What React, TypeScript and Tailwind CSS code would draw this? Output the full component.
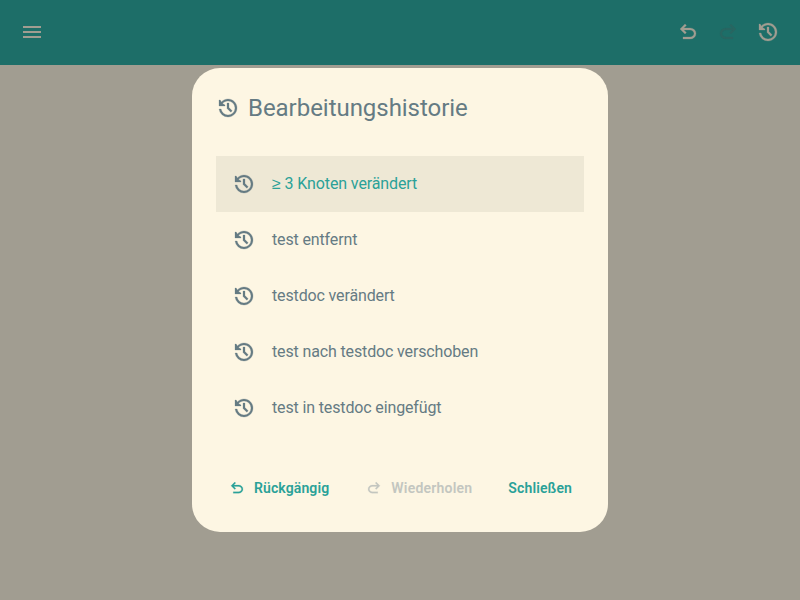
import React from "react";

const HISTORY =
  "M12 21q-3.45 0-6.012-2.287T3.05 13H5.1q.35 2.6 2.313 4.3T12 19q2.925 0 4.963-2.037T19 12t-2.037-4.962T12 5q-1.725 0-3.225.8T6.6 7.6L9 9V10H3V4h1.2L5.4 5.9q1.275-1.4 3.113-2.15T12 3q1.875 0 3.513.713t2.85 1.924 1.925 2.85T21 12t-.712 3.513-1.925 2.85-2.85 1.925T12 21m2.8-4.8L11 12.4V7h2v4.6l3.2 3.2z";
const UNDO =
  "M7 19v-2h7.1q1.575 0 2.738-1T18 13.5 16.838 11 14.1 10H7.8l2.6 2.6L9 14 4 9l5-5 1.4 1.4L7.8 8h6.3q2.425 0 4.163 1.575T20 13.5t-1.737 3.925T14.1 19z";
const REDO =
  "M9.9 19q-2.425 0-4.163-1.575T4 13.5t1.737-3.925T9.9 8h6.3l-2.6-2.6L15 4l5 5-5 5-1.4-1.4 2.6-2.6H9.9q-1.575 0-2.738 1T6 13.5 7.163 16 9.9 17H17v2z";
const MENU = "M3 6h18v2H3V6m0 5h18v2H3v-2m0 5h18v2H3v-2Z";

function Icon({ d, className, stroke = 0.25 }: { d: string; className: string; stroke?: number }) {
  return (
    <svg viewBox="0 0 24 24" fill="currentColor" stroke="currentColor" strokeWidth={stroke} className={`shrink-0 ${className}`}>
      <path d={d} />
    </svg>
  );
}

const entries = [
  { sign: "≥", text: " 3 Knoten verändert" },
  { text: "test entfernt" },
  { text: "testdoc verändert" },
  { text: "test nach testdoc verschoben" },
  { text: "test in testdoc eingefügt" },
];

export default function App() {
  return (
    <div className="relative h-[600px] w-[800px] overflow-hidden bg-[#a19d91] font-['Roboto',sans-serif] text-[#657b83]">
      <header className="flex h-[65px] items-center justify-between bg-[#1d6e68] px-5 pb-px text-[#a19d91]">
        <Icon d={MENU} stroke={0} className="size-6" />
        <div className="flex gap-4">
          <Icon d={UNDO} className="size-6" />
          <Icon d={REDO} className="size-6 text-[#286661]" />
          <Icon d={HISTORY} className="size-6" />
        </div>
      </header>
      <div role="dialog" className="absolute left-[192px] top-[68px] h-[464px] w-[416px] rounded-[28px] bg-[#fdf6e3] px-6">
        <h2 className="flex h-20 items-center gap-2 text-2xl leading-8 tracking-[-0.04px]">
          <Icon d={HISTORY} className="size-6" />
          Bearbeitungshistorie
        </h2>
        <ul className="mt-2">
          {entries.map((entry, i) => (
            <li key={entry.text} className={`flex h-14 items-center gap-4 px-4 text-base ${i === 0 ? "bg-[#eee8d5] tracking-[-0.11px]" : "tracking-[-0.14px]"}`}>
              <Icon d={HISTORY} className="size-6" />
              <span className={i === 0 ? "whitespace-pre text-[#2aa198]" : ""}>
                {entry.sign && <span className="font-['Liberation_Sans',sans-serif] leading-none">{entry.sign}</span>}
                {entry.text}
              </span>
            </li>
          ))}
        </ul>
        <div className="mt-8 flex h-10 items-center justify-end gap-2 text-sm font-semibold tracking-[0.12px] text-[#2aa198]">
          <button className="flex items-center gap-2 pl-3 pr-4"><Icon d={UNDO} className="size-[18px]" />Rückgängig</button>
          <button className="flex items-center gap-2 pl-3 pr-4 tracking-[0.22px] text-[#c3c6c0]"><Icon d={REDO} className="size-[18px]" />Wiederholen</button>
          <button className="px-3">Schließen</button>
        </div>
      </div>
    </div>
  );
}
